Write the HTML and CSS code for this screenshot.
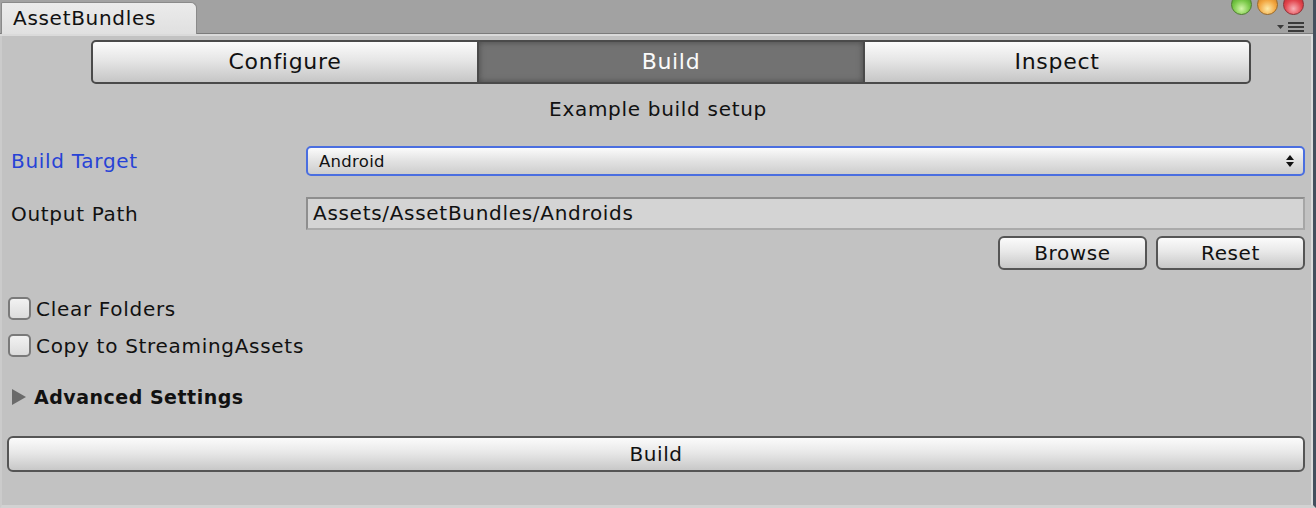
FILE: index.html
```html
<!DOCTYPE html>
<html>
<head>
<meta charset="utf-8">
<link rel="stylesheet" href="styles.css">
</head>
<body>
<div class="window">
  <div class="titlebar">
    <div class="tab">AssetBundles</div>
    <div class="winctl">
      <div class="lights">
        <span class="light green"></span>
        <span class="light orange"></span>
        <span class="light red"></span>
      </div>
      <svg class="menu" width="28" height="12" viewBox="0 0 28 12">
        <polygon points="0,4 7,4 3.5,8" fill="#3a3a3a"/>
        <rect x="11" y="1" width="16" height="2" fill="#3a3a3a"/>
        <rect x="11" y="5" width="16" height="2" fill="#3a3a3a"/>
        <rect x="11" y="9" width="16" height="2" fill="#3a3a3a"/>
      </svg>
    </div>
  </div>
  <div class="content">
    <div class="toolbar">
      <div class="seg">Configure</div>
      <div class="seg active">Build</div>
      <div class="seg">Inspect</div>
    </div>
    <div class="heading">Example build setup</div>
    <div class="row row-target">
      <div class="label blue">Build Target</div>
      <div class="dropdown">
        <span>Android</span>
        <svg width="8" height="12" viewBox="0 0 8 12"><polygon points="4,0 8,5 0,5" fill="#111"/><polygon points="0,7 8,7 4,12" fill="#111"/></svg>
      </div>
    </div>
    <div class="row row-path">
      <div class="label">Output Path</div>
      <div class="field">Assets/AssetBundles/Androids</div>
    </div>
    <div class="btnrow">
      <div class="btn small">Browse</div>
      <div class="btn small">Reset</div>
    </div>
    <div class="check first"><span class="box"></span>Clear Folders</div>
    <div class="check"><span class="box"></span>Copy to StreamingAssets</div>
    <div class="foldout"><span class="tri"></span>Advanced Settings</div>
    <div class="btn wide">Build</div>
  </div>
</div>
</body>
</html>
```

FILE: styles.css
```css
html, body {
  margin: 0;
  padding: 0;
}
body {
  width: 1316px;
  height: 508px;
  overflow: hidden;
  background: #c2c2c2;
  font-family: "DejaVu Sans", "Liberation Sans", sans-serif;
  color: #111;
}
.window {
  width: 1316px;
  height: 508px;
  display: flex;
  flex-direction: column;
  box-sizing: border-box;
  border-right: 3px solid #44505e;
  border-bottom: 3px solid #d2d2d2;
  border-left: 2px solid #cbcbcb;
  position: relative;
}
.window::after {
  content: "";
  position: absolute;
  top: 36px;
  right: 0;
  width: 2px;
  bottom: 0;
  background: #dcdcdc;
}
.titlebar {
  height: 33px;
  margin-left: -2px;
  background: #a2a2a2;
  border-bottom: 1px solid #7c7c7c;
  box-shadow: 0 2px 0 #dadada;
  display: flex;
  justify-content: space-between;
  align-items: flex-end;
  position: relative;
  z-index: 1;
}
.tab {
  width: 183px;
  height: 31px;
  margin-left: 1px;
  margin-bottom: -1px;
  background: linear-gradient(#ebebeb, #e0e0e0);
  border: 1px solid #8a8a8a;
  border-bottom: none;
  border-radius: 2px 6px 0 0;
  font-size: 20px;
  line-height: 31px;
  padding-left: 11px;
  letter-spacing: 0.7px;
}
.winctl {
  display: flex;
  flex-direction: column;
  align-items: flex-end;
  height: 33px;
  padding-right: 9px;
}
.lights {
  display: flex;
  gap: 5px;
  margin-top: -6px;
  margin-right: 0px;
}
.light {
  width: 21px;
  height: 21px;
  border-radius: 50%;
  box-sizing: border-box;
}
.light.green { background: radial-gradient(circle at 50% 72%, #d2f5a8, #78c846 50%, #3f8a22); border: 1px solid #4f7d30; }
.light.orange { background: radial-gradient(circle at 50% 72%, #fdeaa8, #f2a640 50%, #c0701a); border: 1px solid #9a6a2a; }
.light.red { background: radial-gradient(circle at 50% 72%, #f8b0b6, #e2464e 50%, #b21e24); border: 1px solid #8e3036; }
.menu {
  margin-top: 6px;
  margin-right: -1px;
}
.content {
  flex: 1;
  padding: 6px 8px 0 5px;
  display: flex;
  flex-direction: column;
}
.toolbar {
  display: flex;
  margin-left: 84px;
  margin-right: 54px;
  height: 44px;
  box-sizing: border-box;
  border: 2px solid #4a4a4a;
  border-radius: 5px;
  overflow: hidden;
  background: #4a4a4a;
  gap: 2px;
}
.seg {
  flex: 1;
  background: linear-gradient(#fbfbfb 0%, #e6e6e6 45%, #c6c6c6 100%);
  text-align: center;
  font-size: 22px;
  line-height: 40px;
  letter-spacing: 0.7px;
}
.seg.active {
  background: #727272;
  color: #fafafa;
  box-shadow: inset 0 0 6px #4a4a4a;
}
.heading {
  text-align: center;
  font-size: 20px;
  letter-spacing: 0.7px;
  margin-top: 14px;
  line-height: 22px;
  padding-left: 4px;
}
.row {
  display: flex;
  align-items: center;
}
.row-target {
  margin-top: 26px;
  height: 30px;
}
.row-path {
  margin-top: 21px;
  height: 33px;
}
.label {
  width: 299px;
  box-sizing: border-box;
  padding-left: 4px;
  font-size: 20px;
  letter-spacing: 0.7px;
}
.label.blue {
  color: #2743d6;
}
.dropdown {
  flex: 1;
  height: 30px;
  box-sizing: border-box;
  border: 2px solid #4a6ee0;
  border-radius: 5px;
  background: linear-gradient(#fbfbfb, #e2e2e2 50%, #cdcdcd);
  display: flex;
  align-items: center;
  justify-content: space-between;
  padding: 0 9px 0 11px;
  font-size: 16.5px;
  letter-spacing: 0.3px;
}
.field {
  flex: 1;
  height: 33px;
  box-sizing: border-box;
  background: #d4d4d4;
  border: 2px solid #8e8e8e;
  border-bottom-color: #aaaaaa;
  border-right-color: #a6a6a6;
  font-size: 20px;
  line-height: 29px;
  padding-left: 5px;
  letter-spacing: 0.7px;
}
.btn {
  box-sizing: border-box;
  border: 2px solid #555;
  border-radius: 6px;
  background: linear-gradient(#fbfbfb 0%, #e8e8e8 45%, #c8c8c8 100%);
  text-align: center;
  font-size: 20px;
  letter-spacing: 0.6px;
}
.btnrow {
  display: flex;
  justify-content: flex-end;
  gap: 9px;
  margin-top: 6px;
}
.btn.small {
  width: 149px;
  height: 34px;
  line-height: 30px;
}
.check {
  display: flex;
  align-items: center;
  font-size: 20px;
  height: 23px;
  margin-top: 14px;
  letter-spacing: 0.7px;
}
.check.first {
  margin-top: 27px;
}
.box {
  width: 23px;
  height: 23px;
  box-sizing: border-box;
  border: 2px solid #7a7a7a;
  border-radius: 5px;
  background: linear-gradient(#f2f2f2, #dcdcdc);
  margin-left: 1px;
  margin-right: 5px;
}
.foldout {
  display: flex;
  align-items: center;
  font-size: 19px;
  font-weight: bold;
  margin-top: 28px;
  height: 24px;
  letter-spacing: 0.5px;
}
.tri {
  width: 0;
  height: 0;
  border-left: 14px solid #6a6a6a;
  border-top: 8px solid transparent;
  border-bottom: 8px solid transparent;
  margin-left: 5px;
  margin-right: 8px;
}
.btn.wide {
  margin-top: 27px;
  height: 36px;
  line-height: 32px;
}
```
